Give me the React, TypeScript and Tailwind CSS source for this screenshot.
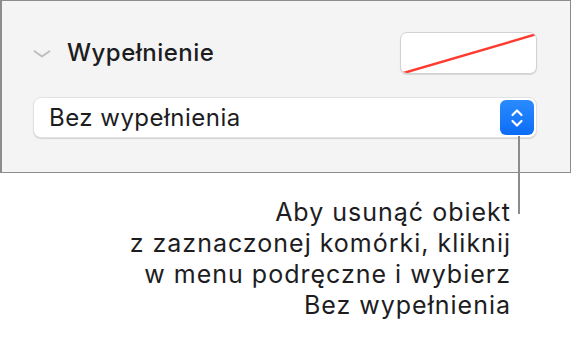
export default function App() {
  return (
    <div className="relative w-[572px] h-[340px] bg-white font-['Inter',sans-serif] text-[#1d1d1f]">
      <div className="w-[571px] h-[173px] border border-[#8c8c8c] border-l-2 bg-[#f4f4f4] pl-[31px] pr-[33px] pt-[31px]">
        <div className="flex items-center justify-between h-[42px]">
          <div className="flex items-center">
            <svg width="18" height="8" viewBox="0 0 18 8" className="mt-[2px]">
              <path d="M1.5 1.2 L9 6.6 L16.5 1.2" fill="none" stroke="#bdbdbd" strokeWidth="1.8" strokeLinecap="round" strokeLinejoin="round" />
            </svg>
            <span className="ml-[16px] text-[24px] font-medium tracking-[0.02em]">Wypełnienie</span>
          </div>
          <div className="w-[137px] h-[42px] rounded-[7px] bg-white border border-[#d2d2d2] shadow-[0_1px_1px_rgba(0,0,0,0.12)] overflow-hidden">
            <svg width="137" height="42" viewBox="0 0 137 42">
              <line x1="1" y1="40.5" x2="136" y2="1" stroke="#ff3b30" strokeWidth="2.4" />
            </svg>
          </div>
        </div>
        <div className="mt-[23px] flex items-center justify-between h-[41px] rounded-[8px] bg-white border border-[#e2e2e2] shadow-[0_1px_1px_rgba(0,0,0,0.14)] pl-[15px] pr-[2px]">
          <span className="text-[24px] tracking-[0.02em]">Bez wypełnienia</span>
          <div className="w-[34px] h-[35px] rounded-[6px] bg-gradient-to-b from-[#2a8bff] to-[#0a6cf5] flex items-center justify-center">
            <svg width="14" height="22" viewBox="0 0 14 22">
              <path d="M2.5 8 L7 3.5 L11.5 8 M2.5 14 L7 18.5 L11.5 14" fill="none" stroke="white" strokeWidth="2.2" strokeLinecap="round" strokeLinejoin="round" />
            </svg>
          </div>
        </div>
      </div>

      <div className="absolute left-[518px] top-[136px] w-[2px] h-[78px] bg-[#8c8c8c]" />

      <div className="pt-[24px] pr-[61px] text-right text-[25px] leading-[31px] tracking-[0.04em]">
        <p>Aby usunąć obiekt</p>
        <p>z zaznaczonej komórki, kliknij</p>
        <p>w menu podręczne i wybierz</p>
        <p>Bez wypełnienia</p>
      </div>
    </div>
  )
}
